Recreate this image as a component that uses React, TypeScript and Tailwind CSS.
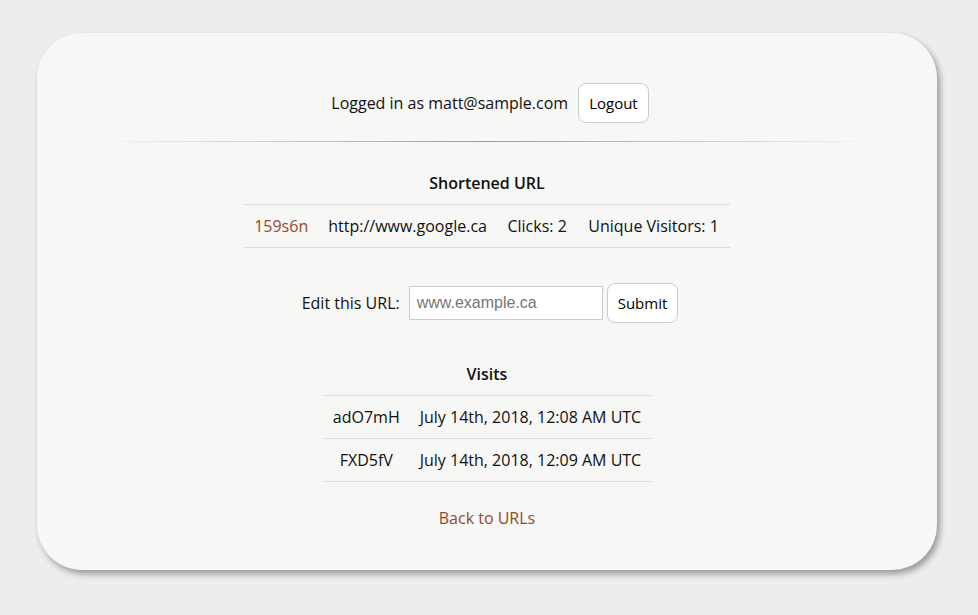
import React from 'react';

const font = { fontFamily: '"Open Sans", "Noto Sans", sans-serif' };

const visits = [
  { id: 'adO7mH', time: 'July 14th, 2018, 12:08 AM UTC' },
  { id: 'FXD5fV', time: 'July 14th, 2018, 12:09 AM UTC' },
];

export default function App() {
  return (
    <div className="w-full min-h-[615px] bg-[#ededed] pt-[33px] pl-[37px]" style={font}>
      <div className="w-[900px] h-[537px] rounded-[45px] bg-[#f7f7f5] shadow-[3px_4px_6px_rgba(0,0,0,0.35)] pt-[50px] text-[16px] text-[#111]">
        {/* Login bar */}
        <div className="flex items-center justify-center gap-[10px] pl-[6px]">
          <span>Logged in as matt@sample.com</span>
          <button className="h-[40px] px-[10px] rounded-[8px] border border-[#ccc] bg-white text-[15px] text-black">
            Logout
          </button>
        </div>

        <div className="mx-[59px] mt-[18px] h-px bg-gradient-to-r from-transparent via-[#999] to-transparent" />

        {/* Shortened URL */}
        <h2 className="mt-[30px] text-center font-semibold leading-[22px]">Shortened URL</h2>
        <table className="mx-auto mt-[10px] border-collapse">
          <tbody>
            <tr className="h-[43px] border-y border-[#ddd]">
              <td className="px-[10px] text-[#8f4b2c]">159s6n</td>
              <td className="px-[10px]">http://www.google.ca</td>
              <td className="px-[10.5px]">Clicks: 2</td>
              <td className="px-[11px]">Unique Visitors: 1</td>
            </tr>
          </tbody>
        </table>

        {/* Edit form */}
        <form className="mt-[35px] flex items-center justify-center gap-[4px] pl-[6px]">
          <label className="mr-[5px]">Edit this URL:</label>
          <input
            className="w-[194px] h-[34px] px-[7px] border border-[#ccc] bg-white text-[16px] placeholder:text-[#777] outline-none"
            style={{ fontFamily: '"Liberation Sans", Arial, sans-serif' }}
            placeholder="www.example.ca"
          />
          <button className="h-[40px] px-[10px] rounded-[8px] border border-[#ccc] bg-white text-[15px] text-black">
            Submit
          </button>
        </form>

        {/* Visits */}
        <h2 className="mt-[40px] text-center font-semibold leading-[22px]">Visits</h2>
        <table className="mx-auto mt-[10px] border-collapse">
          <tbody>
            {visits.map((v) => (
              <tr key={v.id} className="h-[43px] border-y border-[#ddd]">
                <td className="px-[10px] text-center">{v.id}</td>
                <td className="px-[10px]">{v.time}</td>
              </tr>
            ))}
          </tbody>
        </table>

        <div className="mt-[24px] text-center">
          <a href="#" className="text-[#8f4b2c]">Back to URLs</a>
        </div>
      </div>
    </div>
  );
}
